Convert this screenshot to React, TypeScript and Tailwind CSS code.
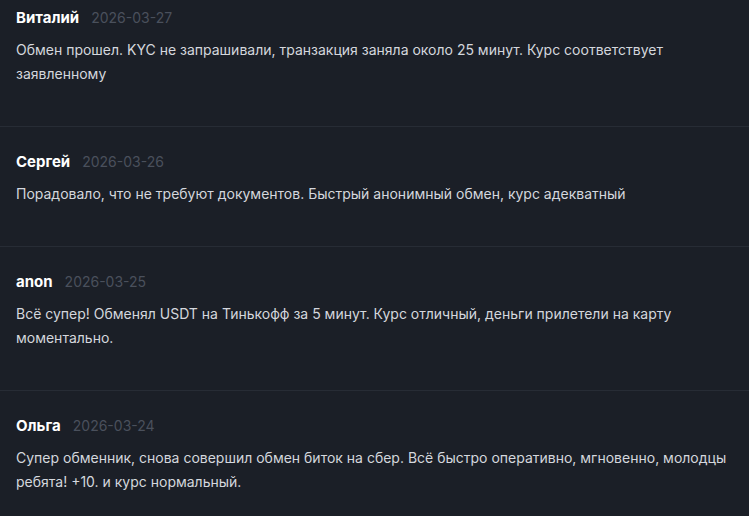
const reviews = [
  {
    name: 'Виталий',
    date: '2026-03-27',
    text: 'Обмен прошел. KYC не запрашивали, транзакция заняла около 25 минут. Курс соответствует заявленному',
  },
  {
    name: 'Сергей',
    date: '2026-03-26',
    text: 'Порадовало, что не требуют документов. Быстрый анонимный обмен, курс адекватный',
  },
  {
    name: 'anon',
    date: '2026-03-25',
    text: 'Всё супер! Обменял USDT на Тинькофф за 5 минут. Курс отличный, деньги прилетели на карту моментально.',
  },
  {
    name: 'Ольга',
    date: '2026-03-24',
    text: 'Супер обменник, снова совершил обмен биток на сбер. Всё быстро оперативно, мгновенно, молодцы ребята! +10. и курс нормальный.',
  },
];

export default function App() {
  return (
    <div className="w-[749px] h-[516px] overflow-hidden bg-[#1b1f27] font-['Inter',sans-serif]">
      <div className="-mt-[17px]">
        {reviews.map((r, i) => (
          <div
            key={r.name}
            className={`px-4 pt-[25px] pb-[40px] ${i < reviews.length - 1 ? 'border-b border-[#272c35]' : ''}`}
          >
            <div className="flex items-baseline gap-3 h-5 leading-5">
              <span className="text-[15px] font-bold text-white">{r.name}</span>
              <span className="text-sm text-[#4a505c]">{r.date}</span>
            </div>
            <p className="mt-[10px] text-sm leading-6 text-[#d4d7dd]">{r.text}</p>
          </div>
        ))}
      </div>
    </div>
  );
}
